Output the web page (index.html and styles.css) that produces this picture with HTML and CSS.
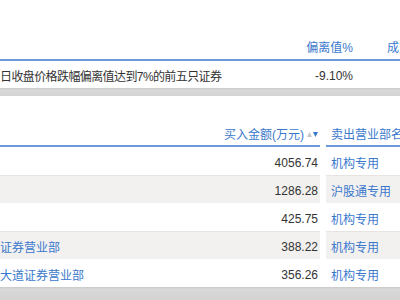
FILE: index.html
```html
<!DOCTYPE html>
<html lang="zh-CN">
<head>
<meta charset="utf-8">
<link rel="stylesheet" href="styles.css">
</head>
<body>
<div class="page">
  <section class="sec sec-top">
    <div class="grid1 head">
      <div class="c desc"></div>
      <div class="c dev">偏离值%</div>
      <div class="c vol">成交</div>
    </div>
    <div class="grid1 row">
      <div class="c desc">日收盘价格跌幅偏离值达到7%的前五只证券</div>
      <div class="c dev num">-9.10%</div>
      <div class="c vol"></div>
    </div>
  </section>
  <div class="band"></div>
  <section class="sec sec-bottom">
    <div class="grid2 head">
      <div class="c buyer"></div>
      <div class="c amt">买入金额(万元)<svg class="sort" width="11" height="6" viewBox="0 0 11 6"><polygon points="0,6 2.5,1 5,6" fill="#c8c8c8"/><polygon points="6,1 11,1 8.5,6" fill="#3a78cc"/></svg></div>
      <div class="c seller">卖出营业部名称</div>
    </div>
    <div class="grid2 row">
      <div class="c buyer link"></div>
      <div class="c amt num">4056.74</div>
      <div class="c seller link">机构专用</div>
    </div>
    <div class="grid2 row alt">
      <div class="c buyer link"></div>
      <div class="c amt num">1286.28</div>
      <div class="c seller link">沪股通专用</div>
    </div>
    <div class="grid2 row">
      <div class="c buyer link"></div>
      <div class="c amt num">425.75</div>
      <div class="c seller link">机构专用</div>
    </div>
    <div class="grid2 row alt">
      <div class="c buyer link">证券营业部</div>
      <div class="c amt num">388.22</div>
      <div class="c seller link">机构专用</div>
    </div>
    <div class="grid2 row">
      <div class="c buyer link">大道证券营业部</div>
      <div class="c amt num">356.26</div>
      <div class="c seller link">机构专用</div>
    </div>
  </section>
  <div class="band band-bottom"></div>
</div>
</body>
</html>
```

FILE: styles.css
```css
* { box-sizing: border-box; }
html, body { margin: 0; padding: 0; background: #fff; }
body {
  width: 400px;
  height: 300px;
  overflow: hidden;
  font-family: "Liberation Sans", "Noto Sans CJK SC", sans-serif;
  font-size: 12px;
  color: #333;
}
.page { width: 400px; }
.sec-top { padding-top: 34px; }
.sec-bottom { padding-top: 24px; }
.c {
  white-space: nowrap;
  overflow: hidden;
  display: flex;
  align-items: center;
}
.grid1 {
  display: grid;
  grid-template-columns: 260px 100px 40px;
}
.grid2 {
  display: grid;
  grid-template-columns: 220px 100px 80px;
}
.head { height: 27px; color: #3a78cc; }
.head .c { border-bottom: 2px solid #6a9ad8; }
.grid2.head .c { padding-top: 2px; }
.grid1.row { height: 27px; }
.grid1.row .c { padding-top: 2px; }
.grid2.row { height: 28px; }
.grid2.row .c { padding-top: 3px; }
.desc { padding-left: 0; letter-spacing: -0.6px; }
.dev { justify-content: flex-end; padding-right: 7px; }
.vol { padding-left: 27px; }
.amt { justify-content: flex-end; padding-right: 2px; }
.seller { margin-left: 6px; padding-left: 5px; }
.buyer { padding-left: 0; }
.link { color: #3a78cc; }
.num { color: #333; }
.alt .c { background: #f2f1f0; box-shadow: inset 0 1px 0 #e6e4e2; }
.sort { flex: none; margin-left: 3px; margin-top: 1px; }
.band {
  height: 8px;
  background: linear-gradient(#c9c9c9, #d9d9d9 2px, #d3d3d3);
}
.band-bottom { height: 13px; }
```
